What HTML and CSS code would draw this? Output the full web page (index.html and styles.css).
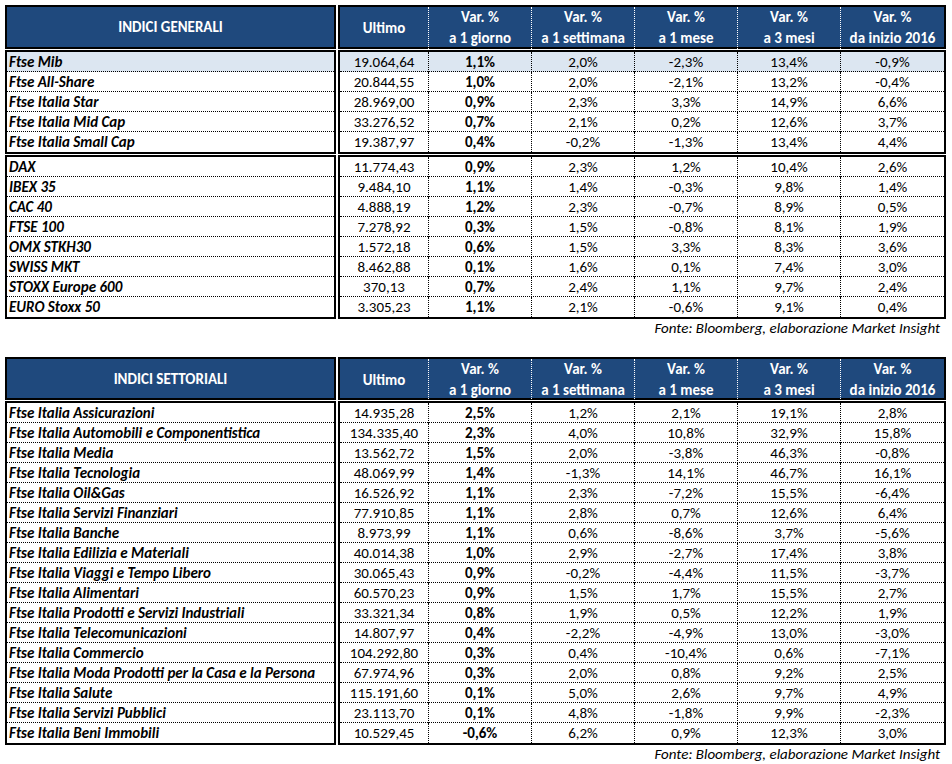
FILE: index.html
```html
<!DOCTYPE html>
<html lang="it">
<head>
<meta charset="utf-8">
<title>Indici</title>
<link rel="stylesheet" href="styles.css">
</head>
<body>
<div class="page">
  <section class="block">
    <div class="box head head-label">INDICI GENERALI</div>
    <div class="box head head-data">
      <div class="hc one">Ultimo</div>
      <div class="hc">Var. %<br>a 1 giorno</div>
      <div class="hc">Var. %<br>a 1 settimana</div>
      <div class="hc">Var. %<br>a 1 mese</div>
      <div class="hc">Var. %<br>a 3 mesi</div>
      <div class="hc">Var. %<br>da inizio 2016</div>
    </div>

    <div class="box labels">
      <div class="lbl hl">Ftse Mib</div>
      <div class="lbl">Ftse All-Share</div>
      <div class="lbl">Ftse Italia Star</div>
      <div class="lbl">Ftse Italia Mid Cap</div>
      <div class="lbl">Ftse Italia Small Cap</div>
    </div>
    <div class="box values">
      <div class="row hl"><span>19.064,64</span><span class="b">1,1%</span><span>2,0%</span><span>-2,3%</span><span>13,4%</span><span>-0,9%</span></div>
      <div class="row"><span>20.844,55</span><span class="b">1,0%</span><span>2,0%</span><span>-2,1%</span><span>13,2%</span><span>-0,4%</span></div>
      <div class="row"><span>28.969,00</span><span class="b">0,9%</span><span>2,3%</span><span>3,3%</span><span>14,9%</span><span>6,6%</span></div>
      <div class="row"><span>33.276,52</span><span class="b">0,7%</span><span>2,1%</span><span>0,2%</span><span>12,6%</span><span>3,7%</span></div>
      <div class="row"><span>19.387,97</span><span class="b">0,4%</span><span>-0,2%</span><span>-1,3%</span><span>13,4%</span><span>4,4%</span></div>
    </div>

    <div class="box labels">
      <div class="lbl">DAX</div>
      <div class="lbl">IBEX 35</div>
      <div class="lbl">CAC 40</div>
      <div class="lbl">FTSE 100</div>
      <div class="lbl">OMX STKH30</div>
      <div class="lbl">SWISS MKT</div>
      <div class="lbl">STOXX Europe 600</div>
      <div class="lbl">EURO Stoxx 50</div>
    </div>
    <div class="box values">
      <div class="row"><span>11.774,43</span><span class="b">0,9%</span><span>2,3%</span><span>1,2%</span><span>10,4%</span><span>2,6%</span></div>
      <div class="row"><span>9.484,10</span><span class="b">1,1%</span><span>1,4%</span><span>-0,3%</span><span>9,8%</span><span>1,4%</span></div>
      <div class="row"><span>4.888,19</span><span class="b">1,2%</span><span>2,3%</span><span>-0,7%</span><span>8,9%</span><span>0,5%</span></div>
      <div class="row"><span>7.278,92</span><span class="b">0,3%</span><span>1,5%</span><span>-0,8%</span><span>8,1%</span><span>1,9%</span></div>
      <div class="row"><span>1.572,18</span><span class="b">0,6%</span><span>1,5%</span><span>3,3%</span><span>8,3%</span><span>3,6%</span></div>
      <div class="row"><span>8.462,88</span><span class="b">0,1%</span><span>1,6%</span><span>0,1%</span><span>7,4%</span><span>3,0%</span></div>
      <div class="row"><span>370,13</span><span class="b">0,7%</span><span>2,4%</span><span>1,1%</span><span>9,7%</span><span>2,4%</span></div>
      <div class="row"><span>3.305,23</span><span class="b">1,1%</span><span>2,1%</span><span>-0,6%</span><span>9,1%</span><span>0,4%</span></div>
    </div>
  </section>
  <p class="fonte">Fonte: Bloomberg, elaborazione Market Insight</p>

  <section class="block second">
    <div class="box head head-label">INDICI SETTORIALI</div>
    <div class="box head head-data">
      <div class="hc one">Ultimo</div>
      <div class="hc">Var. %<br>a 1 giorno</div>
      <div class="hc">Var. %<br>a 1 settimana</div>
      <div class="hc">Var. %<br>a 1 mese</div>
      <div class="hc">Var. %<br>a 3 mesi</div>
      <div class="hc">Var. %<br>da inizio 2016</div>
    </div>

    <div class="box labels">
      <div class="lbl">Ftse Italia Assicurazioni</div>
      <div class="lbl">Ftse Italia Automobili e Componentistica</div>
      <div class="lbl">Ftse Italia Media</div>
      <div class="lbl">Ftse Italia Tecnologia</div>
      <div class="lbl">Ftse Italia Oil&amp;Gas</div>
      <div class="lbl">Ftse Italia Servizi Finanziari</div>
      <div class="lbl">Ftse Italia Banche</div>
      <div class="lbl">Ftse Italia Edilizia e Materiali</div>
      <div class="lbl">Ftse Italia Viaggi e Tempo Libero</div>
      <div class="lbl">Ftse Italia Alimentari</div>
      <div class="lbl">Ftse Italia Prodotti e Servizi Industriali</div>
      <div class="lbl">Ftse Italia Telecomunicazioni</div>
      <div class="lbl">Ftse Italia Commercio</div>
      <div class="lbl">Ftse Italia Moda Prodotti per la Casa e la Persona</div>
      <div class="lbl">Ftse Italia Salute</div>
      <div class="lbl">Ftse Italia Servizi Pubblici</div>
      <div class="lbl">Ftse Italia Beni Immobili</div>
    </div>
    <div class="box values">
      <div class="row"><span>14.935,28</span><span class="b">2,5%</span><span>1,2%</span><span>2,1%</span><span>19,1%</span><span>2,8%</span></div>
      <div class="row"><span>134.335,40</span><span class="b">2,3%</span><span>4,0%</span><span>10,8%</span><span>32,9%</span><span>15,8%</span></div>
      <div class="row"><span>13.562,72</span><span class="b">1,5%</span><span>2,0%</span><span>-3,8%</span><span>46,3%</span><span>-0,8%</span></div>
      <div class="row"><span>48.069,99</span><span class="b">1,4%</span><span>-1,3%</span><span>14,1%</span><span>46,7%</span><span>16,1%</span></div>
      <div class="row"><span>16.526,92</span><span class="b">1,1%</span><span>2,3%</span><span>-7,2%</span><span>15,5%</span><span>-6,4%</span></div>
      <div class="row"><span>77.910,85</span><span class="b">1,1%</span><span>2,8%</span><span>0,7%</span><span>12,6%</span><span>6,4%</span></div>
      <div class="row"><span>8.973,99</span><span class="b">1,1%</span><span>0,6%</span><span>-8,6%</span><span>3,7%</span><span>-5,6%</span></div>
      <div class="row"><span>40.014,38</span><span class="b">1,0%</span><span>2,9%</span><span>-2,7%</span><span>17,4%</span><span>3,8%</span></div>
      <div class="row"><span>30.065,43</span><span class="b">0,9%</span><span>-0,2%</span><span>-4,4%</span><span>11,5%</span><span>-3,7%</span></div>
      <div class="row"><span>60.570,23</span><span class="b">0,9%</span><span>1,5%</span><span>1,7%</span><span>15,5%</span><span>2,7%</span></div>
      <div class="row"><span>33.321,34</span><span class="b">0,8%</span><span>1,9%</span><span>0,5%</span><span>12,2%</span><span>1,9%</span></div>
      <div class="row"><span>14.807,97</span><span class="b">0,4%</span><span>-2,2%</span><span>-4,9%</span><span>13,0%</span><span>-3,0%</span></div>
      <div class="row"><span>104.292,80</span><span class="b">0,3%</span><span>0,4%</span><span>-10,4%</span><span>0,6%</span><span>-7,1%</span></div>
      <div class="row"><span>67.974,96</span><span class="b">0,3%</span><span>2,0%</span><span>0,8%</span><span>9,2%</span><span>2,5%</span></div>
      <div class="row"><span>115.191,60</span><span class="b">0,1%</span><span>5,0%</span><span>2,6%</span><span>9,7%</span><span>4,9%</span></div>
      <div class="row"><span>23.113,70</span><span class="b">0,1%</span><span>4,8%</span><span>-1,8%</span><span>9,9%</span><span>-2,3%</span></div>
      <div class="row"><span>10.529,45</span><span class="b">-0,6%</span><span>6,2%</span><span>0,9%</span><span>12,3%</span><span>3,0%</span></div>
    </div>
  </section>
  <p class="fonte">Fonte: Bloomberg, elaborazione Market Insight</p>
</div>
</body>
</html>
```

FILE: styles.css
```css
* { box-sizing: border-box; }

html, body {
  margin: 0;
  padding: 0;
  background: #ffffff;
}

body {
  font-family: "Carlito", "Lato", "Liberation Sans", sans-serif;
  font-size: 15px;
  color: #000000;
}

.page {
  padding: 5px 0 0 5px;
  width: 952px;
}

.block {
  display: grid;
  grid-template-columns: 331px 608px;
  column-gap: 2px;
  row-gap: 1px;
}

.block.second {
  margin-top: 20px;
}

.box {
  border: 2px solid #000000;
}

.head {
  height: 44px;
  background: #1f497d;
  color: #ffffff;
  font-weight: bold;
}

.second .head {
  height: 43px;
}

.head-label {
  display: flex;
  align-items: center;
  justify-content: center;
}

.head-data {
  display: grid;
  grid-template-columns: 89px repeat(4, 103px) 103px;
}

.hc {
  display: flex;
  align-items: center;
  justify-content: center;
  text-align: center;
  line-height: 21px;
  border-right: 1px dotted #ffffff;
}

.hc:last-child {
  border-right: none;
}

.lbl {
  height: 20px;
  line-height: 20px;
  padding-left: 2px;
  font-weight: bold;
  font-style: italic;
  border-bottom: 1px dotted #000000;
  white-space: nowrap;
}

.lbl:last-child,
.row:last-child {
  border-bottom: none;
}

.row {
  display: grid;
  grid-template-columns: 89px repeat(4, 103px) 103px;
  height: 20px;
  border-bottom: 1px dotted #000000;
}

.row span {
  text-align: center;
  line-height: 20px;
  border-right: 1px dotted #000000;
  white-space: nowrap;
}

.row span:last-child {
  border-right: none;
}

.row .b {
  font-weight: bold;
}

.hl {
  background: #dce6f1;
}

.fonte {
  margin: 0;
  width: 941px;
  padding-right: 6px;
  text-align: right;
  font-style: italic;
  line-height: 18px;
}
```
